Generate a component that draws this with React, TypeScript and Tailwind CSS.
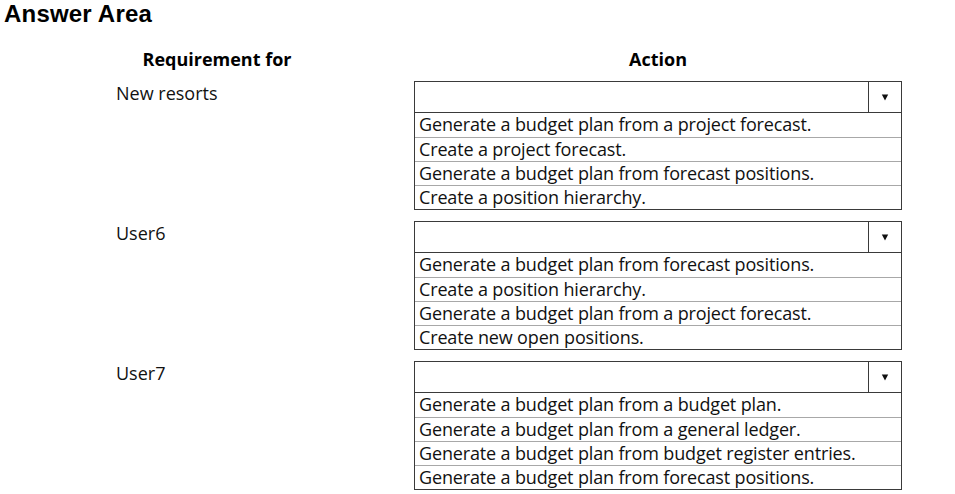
const groups = [
  {
    label: "New resorts",
    options: [
      "Generate a budget plan from a project forecast.",
      "Create a project forecast.",
      "Generate a budget plan from forecast positions.",
      "Create a position hierarchy.",
    ],
  },
  {
    label: "User6",
    options: [
      "Generate a budget plan from forecast positions.",
      "Create a position hierarchy.",
      "Generate a budget plan from a project forecast.",
      "Create new open positions.",
    ],
  },
  {
    label: "User7",
    options: [
      "Generate a budget plan from a budget plan.",
      "Generate a budget plan from a general ledger.",
      "Generate a budget plan from budget register entries.",
      "Generate a budget plan from forecast positions.",
    ],
  },
];

function Dropdown({ options }: { options: string[] }) {
  return (
    <div className="w-[488px] border border-[#3a3a3a] bg-white">
      <div className="flex h-[31px] border-b border-[#3a3a3a]">
        <div className="flex-1" />
        <div className="flex w-[33px] items-center justify-center border-l border-[#3a3a3a]">
          <svg width="8" height="8" viewBox="0 0 8 8">
            <path d="M0.8 1.5 H7.2 L4 7.5 Z" fill="#111" />
          </svg>
        </div>
      </div>
      {options.map((opt, i) => (
        <div
          key={i}
          className={
            "h-[24px] truncate pl-[4px] text-[18px] leading-[22px] tracking-[-0.15px] text-[#111] " +
            (i > 0 ? "border-t border-[#a8a8a8]" : "")
          }
        >
          {opt}
        </div>
      ))}
    </div>
  );
}

export default function App() {
  return (
    <div className="h-[494px] w-[955px] overflow-hidden bg-white font-['Open_Sans',sans-serif] text-[#111]">
      <h1 className="pl-[4px] pt-[1px] font-['Liberation_Sans',Arial,sans-serif] text-[24px] font-bold leading-[26px] tracking-[0.2px] text-black">
        Answer Area
      </h1>

      <div className="pl-[116px] pt-[20px]">
        {/* column headings */}
        <div className="flex text-[18px] font-bold leading-[24px] text-black">
          <div className="w-[298px]">
            <div className="w-[202px] text-center">Requirement for</div>
          </div>
          <div className="w-[488px] text-center">Action</div>
        </div>

        <div className="mt-[10px] flex flex-col gap-[11px]">
          {groups.map((g) => (
            <div key={g.label} className="flex">
              <div className="w-[298px] text-[18px] leading-[24px]">{g.label}</div>
              <Dropdown options={g.options} />
            </div>
          ))}
        </div>
      </div>
    </div>
  );
}
